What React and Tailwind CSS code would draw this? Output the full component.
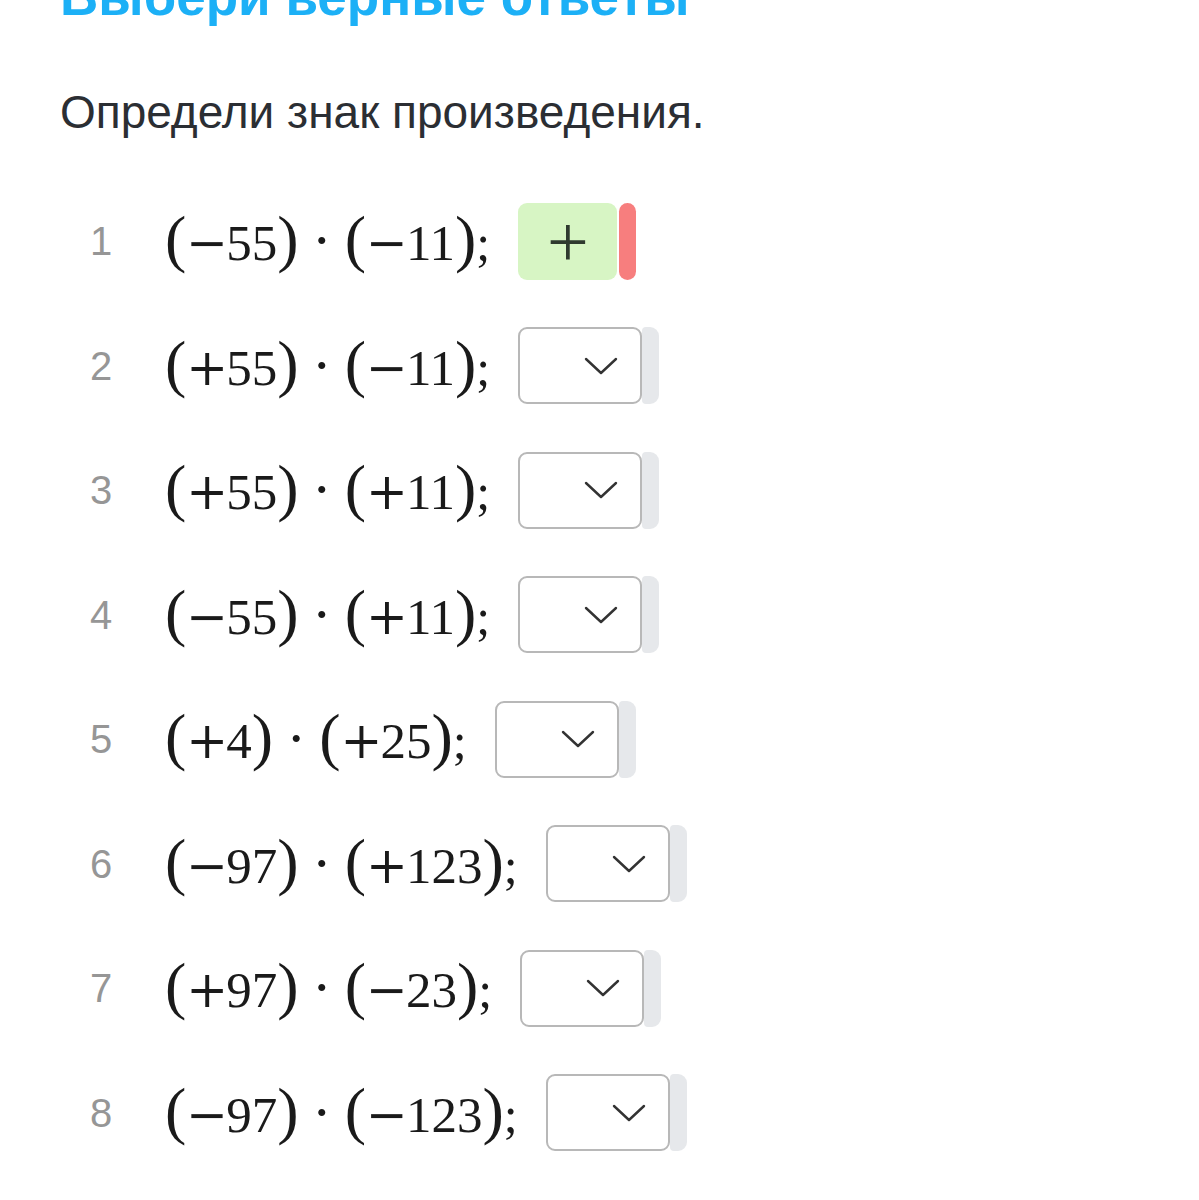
import React from 'react';

const rows = [
  { n: 1, a: ['−', '55'], b: ['−', '11'], value: '+' },
  { n: 2, a: ['+', '55'], b: ['−', '11'] },
  { n: 3, a: ['+', '55'], b: ['+', '11'] },
  { n: 4, a: ['−', '55'], b: ['+', '11'] },
  { n: 5, a: ['+', '4'], b: ['+', '25'] },
  { n: 6, a: ['−', '97'], b: ['+', '123'] },
  { n: 7, a: ['+', '97'], b: ['−', '23'] },
  { n: 8, a: ['−', '97'], b: ['−', '123'] },
];

const Factor = ({ sign, num }) => (
  <>
    <span className="text-[64px]">(</span>
    <span className="w-[40px] text-center text-[50px] font-['DejaVu_Serif',serif]">{sign}</span>
    <span className="text-[51px]">{num}</span>
    <span className="text-[64px]">)</span>
  </>
);

const Chevron = () => (
  <svg width="34" height="18" viewBox="0 0 34 18" fill="none">
    <path d="M2 2 L17 16 L32 2" stroke="#333" strokeWidth="2.4" strokeLinecap="round" strokeLinejoin="round" />
  </svg>
);

const Answer = ({ value }) => {
  if (value) {
    return (
      <div className="flex items-center gap-[2px] ml-[28px]">
        <div className="w-[99px] h-[77px] rounded-[9px] bg-[#d7f5c4] flex items-center justify-center text-[#2f3a2f] text-[74px] leading-none font-['Liberation_Serif',serif] pt-[2px]">
          {value}
        </div>
        <div className="w-[17px] h-[77px] rounded-full bg-[#f77e7e]" />
      </div>
    );
  }
  return (
    <div className="flex items-center ml-[28px]">
      <div className="w-[124px] h-[77px] rounded-[9px] border-2 border-[#b8b8b8] bg-white flex items-center justify-end pr-[22px]">
        <Chevron />
      </div>
      <div className="w-[17px] h-[77px] rounded-r-[9px] rounded-l-[4px] bg-[#e6e8eb]" />
    </div>
  );
};

export default function App() {
  return (
    <div className="bg-white min-h-[1200px] overflow-hidden pl-[60px] font-['Liberation_Sans',Arial,sans-serif]">
      <h1 className="mt-[-30px] text-[53px] leading-none font-bold text-[#1cb0f6] whitespace-nowrap">
        Выбери верные ответы
      </h1>
      <p className="mt-[66px] text-[46px] leading-none text-[#2b2e33]">
        Определи знак произведения.
      </p>

      <div className="mt-[44px] flex flex-col">
        {rows.map(r => (
          <div key={r.n} className="h-[124.5px] flex items-center">
            <span className="ml-[30px] w-[23px] text-[40px] leading-none text-[#969696]">{r.n}</span>
            <div className="ml-[52px] -mt-[4px] flex items-baseline leading-none text-[#1a1a1a] font-['Liberation_Serif',serif]">
              <Factor sign={r.a[0]} num={r.a[1]} />
              <span className="w-[46px] text-center text-[60px]">·</span>
              <Factor sign={r.b[0]} num={r.b[1]} />
              <span className="text-[50px]">;</span>
            </div>
            <Answer value={r.value} />
          </div>
        ))}
      </div>
    </div>
  );
}
